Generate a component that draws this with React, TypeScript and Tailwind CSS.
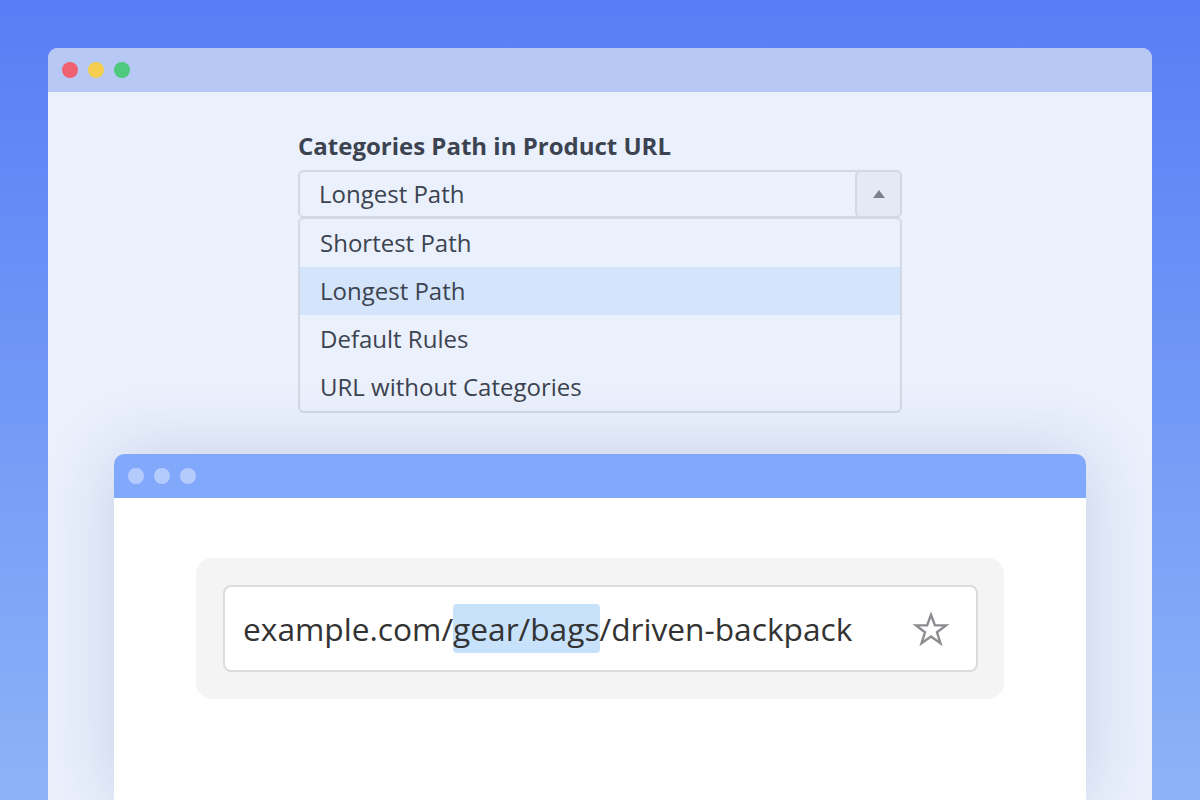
import React from "react";

const font = { fontFamily: '"Open Sans", "Noto Sans", sans-serif' };

export default function App() {
  return (
    <div
      className="w-[1200px] h-[800px] overflow-hidden bg-gradient-to-b from-[#5a7cf5] to-[#8db3f7] pt-[48px] px-[48px]"
      style={font}
    >
      <div className="h-[752px] rounded-t-[10px] bg-[#eaf0fc] flex flex-col overflow-hidden">
        <div className="h-[44px] shrink-0 bg-[#b6c8f3] flex items-center gap-[10px] px-[14px]">
          <div className="w-[16px] h-[16px] rounded-full bg-[#ef6170]" />
          <div className="w-[16px] h-[16px] rounded-full bg-[#f4cf52]" />
          <div className="w-[16px] h-[16px] rounded-full bg-[#4fc97d]" />
        </div>
        <div className="flex flex-col items-center pt-[38px]">
          <div className="w-[604px] flex flex-col">
            <div className="text-[24px] leading-[32px] font-bold text-[#3c4350]">
              Categories Path in Product URL
            </div>
            <div className="mt-[8px] h-[48px] flex border-2 border-[#d3d9e3] rounded-[6px] bg-[#eaf0fc]">
              <div className="flex-1 flex items-center pl-[19px] text-[24px] text-[#3c4350]">
                Longest Path
              </div>
              <div className="w-[47px] -my-[2px] -mr-[2px] border-2 border-[#d3d9e3] rounded-[6px] bg-[#e4e9f3] flex items-center justify-center">
                <svg width="12" height="8" viewBox="0 0 12 8">
                  <path d="M6 0 L12 8 L0 8 Z" fill="#7c828c" />
                </svg>
              </div>
            </div>
            <div className="-mt-[1px] border-2 border-[#d3d9e3] rounded-[6px] bg-[#eaf0fc] flex flex-col overflow-hidden text-[24px] text-[#3c4350]">
              <div className="h-[48px] flex items-center pl-[20px]">Shortest Path</div>
              <div className="h-[48px] flex items-center pl-[20px] bg-[#d4e5fb]">Longest Path</div>
              <div className="h-[48px] flex items-center pl-[20px]">Default Rules</div>
              <div className="h-[48px] flex items-center pl-[20px]">URL without Categories</div>
            </div>
          </div>
        </div>
        <div className="mx-[66px] mt-[41px] flex-1 rounded-t-[10px] bg-white flex flex-col shadow-[0_0_70px_rgba(40,60,130,0.18)]">
          <div className="h-[44px] shrink-0 rounded-t-[10px] bg-[#82a8fc] flex items-center gap-[10px] px-[14px]">
            <div className="w-[16px] h-[16px] rounded-full bg-[#b3cbfd]" />
            <div className="w-[16px] h-[16px] rounded-full bg-[#b3cbfd]" />
            <div className="w-[16px] h-[16px] rounded-full bg-[#b3cbfd]" />
          </div>
          <div className="mx-[82px] mt-[60px] bg-[#f4f4f4] rounded-[16px] p-[27px] pr-[26px]">
            <div className="h-[87px] bg-white border-2 border-[#dcdcdc] rounded-[8px] flex items-center pl-[18px] pr-[26px]">
              <div className="flex-1 text-[31.7px] text-[#333333] whitespace-nowrap flex items-center">
                <span>example.com/</span>
                <span className="bg-[#c8e2fc] rounded-[4px] py-[1px]">gear/bags</span>
                <span>/driven-backpack</span>
              </div>
              <svg width="38" height="36" viewBox="0 0 24 24" fill="none" stroke="#8a8c8f" strokeWidth="1.6" strokeLinejoin="miter">
                <path d="M12 2.5 L14.6 9.6 L22 9.6 L16 14.2 L18.3 21.5 L12 17 L5.7 21.5 L8 14.2 L2 9.6 L9.4 9.6 Z" />
              </svg>
            </div>
          </div>
        </div>
      </div>
    </div>
  );
}
